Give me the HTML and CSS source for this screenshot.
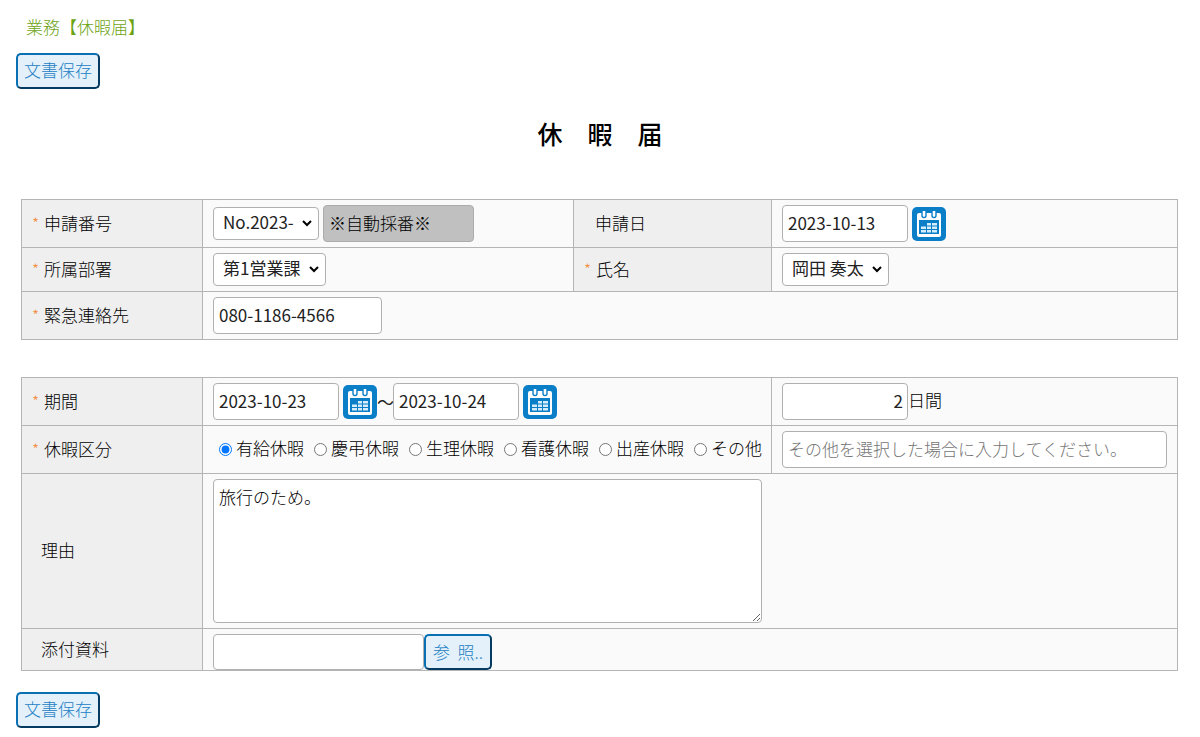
FILE: index.html
```html
<!DOCTYPE html>
<html lang="ja">
<head>
<meta charset="utf-8">
<title>休暇届</title>
<link rel="stylesheet" href="styles.css">
</head>
<body>
<svg class="defs" aria-hidden="true">
  <symbol id="calendar" viewBox="0 0 34 34">
    <rect width="34" height="34" rx="5" fill="#0a7fc8"/>
    <rect x="5" y="6" width="24" height="24" rx="2" fill="#fff"/>
    <rect x="7" y="13" width="20" height="14" fill="#0a7fc8"/>
    <path d="M10 4v4.500a2 2 0 0 0 4 0V4M20 4v4.500a2 2 0 0 0 4 0V4" fill="#fff" stroke="#0a7fc8" stroke-width="1.400"/>
    <path d="M11 4v4.500a1 1 0 0 0 2 0V4zM21 4v4.500a1 1 0 0 0 2 0V4z" fill="#fff"/>
    <path d="M15 16h4v2.500h-4zM20 16h5v2.500h-5zM9 19.500h5V22H9zM15 19.500h4V22h-4zM20 19.500h5V22h-5zM9 23h5v2.500H9zM15 23h4v2.500h-4zM20 23h5v2.500h-5z" fill="#d5edfb"/>
  </symbol>
</svg>
<main class="page">
  <p class="breadcrumb">業務【休暇届】</p>
  <button class="btn" type="button">文書保存</button>
  <h1 class="title">休　暇　届</h1>

  <form class="form">
    <table class="sheet">
      <colgroup><col class="col-label"><col class="col-main"><col class="col-sub"><col></colgroup>
      <tr>
        <th class="required" scope="row"><label for="no">申請番号</label></th>
        <td><div class="fields">
          <select id="no" class="select"><option>No.2023-</option></select>
          <input class="input input--auto" type="text" value="※自動採番※" aria-label="自動採番" readonly>
        </div></td>
        <th class="optional" scope="row"><label for="applied">申請日</label></th>
        <td><div class="fields">
          <input id="applied" class="input input--date" type="text" value="2023-10-13">
          <button class="cal" type="button" aria-label="申請日を選択"><svg><use href="#calendar"/></svg></button>
        </div></td>
      </tr>
      <tr>
        <th class="required" scope="row"><label for="dept">所属部署</label></th>
        <td><div class="fields"><select id="dept" class="select"><option>第1営業課</option></select></div></td>
        <th class="required" scope="row"><label for="name">氏名</label></th>
        <td><div class="fields"><select id="name" class="select"><option>岡田 奏太</option></select></div></td>
      </tr>
      <tr>
        <th class="required" scope="row"><label for="tel">緊急連絡先</label></th>
        <td colspan="3"><div class="fields"><input id="tel" class="input input--tel" type="text" value="080-1186-4566"></div></td>
      </tr>
    </table>

    <table class="sheet">
      <colgroup><col class="col-label"><col class="col-main"><col class="col-sub"><col></colgroup>
      <tr>
        <th class="required" scope="row"><label for="from">期間</label></th>
        <td colspan="2"><div class="fields">
          <input id="from" class="input input--date" type="text" value="2023-10-23">
          <button class="cal" type="button" aria-label="開始日を選択"><svg><use href="#calendar"/></svg></button><span class="tilde">～</span><input class="input input--date" type="text" value="2023-10-24" aria-label="終了日">
          <button class="cal" type="button" aria-label="終了日を選択"><svg><use href="#calendar"/></svg></button>
        </div></td>
        <td><div class="fields">
          <input id="days" class="input input--days" type="text" value="2"><label class="unit" for="days">日間</label>
        </div></td>
      </tr>
      <tr>
        <th class="required" scope="row">休暇区分</th>
        <td colspan="2"><div class="radios">
          <label class="radio"><input type="radio" name="kind" checked><span class="unit">有給休暇</span></label>
          <label class="radio"><input type="radio" name="kind"><span class="unit">慶弔休暇</span></label>
          <label class="radio"><input type="radio" name="kind"><span class="unit">生理休暇</span></label>
          <label class="radio"><input type="radio" name="kind"><span class="unit">看護休暇</span></label>
          <label class="radio"><input type="radio" name="kind"><span class="unit">出産休暇</span></label>
          <label class="radio"><input type="radio" name="kind"><span class="unit">その他</span></label>
        </div></td>
        <td><div class="fields"><input class="input input--fill" type="text" placeholder="その他を選択した場合に入力してください。" aria-label="その他の内容"></div></td>
      </tr>
      <tr>
        <th class="plain" scope="row"><label for="reason">理由</label></th>
        <td colspan="2" class="open-right"><textarea id="reason" class="textarea">旅行のため。</textarea></td>
        <td class="open-left"></td>
      </tr>
      <tr>
        <th class="plain" scope="row"><label for="file">添付資料</label></th>
        <td colspan="3" class="flush"><div class="fields">
          <input id="file" class="input input--file" type="text"><button class="btn btn--browse" type="button">参&nbsp; 照..</button>
        </div></td>
      </tr>
    </table>
  </form>

  <button class="btn" type="button">文書保存</button>
</main>
</body>
</html>
```
FILE: styles.css
```css
* { box-sizing: border-box; }

body {
  margin: 0;
  background: #fff;
  color: #222;
  font: 400 17px/24px "Noto Sans CJK JP", sans-serif;
}

input, select, textarea, button { font: inherit; color: inherit; }

.defs { position: absolute; width: 0; height: 0; }

.page { padding: 15px 22px 8px 16px; }

.breadcrumb { margin: 0 0 14px 10px; color: #6ca313; font-weight: 300; }

.btn {
  display: block;
  height: 36px;
  margin: 0;
  padding: 0 6px 2px;
  border: 2px outset #0a70b4;
  border-radius: 5px;
  background: #e4f1fa;
  color: #2280c4;
  font-weight: 300;
  line-height: 30px;
  white-space: nowrap;
}

.btn--browse { padding: 0 7px; }

.title {
  margin: 26px 0 47px;
  padding-left: 6px;
  color: #000;
  font-size: 25px;
  font-weight: 500;
  line-height: 37px;
  text-align: center;
}

.form {
  display: grid;
  gap: 37px;
  margin: 0 0 21px 5px;
}

.sheet {
  width: 100%;
  border-collapse: collapse;
  table-layout: fixed;
}

.col-label { width: 181px; }
.col-main { width: 371px; }
.col-sub { width: 198px; }

.sheet th,
.sheet td {
  padding: 5px 10px;
  border: 1px solid #b5b5b5;
  text-align: left;
  vertical-align: middle;
}

.sheet th {
  padding-top: 4px;
  padding-bottom: 6px;
  background: #efefef;
  font-weight: 300;
  color: #000;
}

.sheet td { background: #fafafa; }

.required::before {
  content: "*";
  display: inline-block;
  width: 12px;
  color: #f08a3c;
  font-size: 16px;
}

.sheet .optional { padding-left: 21px; }
.sheet .plain { padding-left: 19px; }
.sheet .open-right { border-right: 0; }
.sheet .open-left { border-left: 0; }
.sheet .flush { padding-bottom: 0; }

.fields { display: flex; align-items: center; }

.input,
.select,
.textarea {
  margin: 0;
  border: 1px solid #b0b0b0;
  border-radius: 4px;
  background: #fff;
}

.input { height: 37px; padding: 0 5px 3px; }
.input::placeholder { color: #757575; font-weight: 300; opacity: 1; }
.input--auto { width: 151px; margin-left: 4px; border-color: #acacac; background: #c0c0c0; font-weight: 300; color: #000; }
.input--date { width: 126px; }
.input--tel { width: 169px; }
.input--days { width: 126px; padding-right: 4px; text-align: right; }
.input--fill { width: 100%; }
.input--file { width: 211px; height: 36px; }

.select {
  height: 33px;
  padding: 0 24px 3px 9px;
  appearance: none;
  background: #fff url("data:image/svg+xml,%3Csvg xmlns='http://www.w3.org/2000/svg' width='10' height='7'%3E%3Cpath d='M1 1l4 4 4-4' fill='none' stroke='%23000' stroke-width='2'/%3E%3C/svg%3E") no-repeat right 6px center;
}

.textarea {
  display: block;
  width: 100%;
  height: 144px;
  padding: 5px;
  font-weight: 300;
  color: #000;
}

.cal {
  width: 34px;
  height: 34px;
  margin-left: 4px;
  padding: 0;
  border: 0;
  background: none;
}

.cal svg { display: block; width: 34px; height: 34px; }

.tilde { width: 16px; }

.radios { display: flex; gap: 10px; padding-left: 6px; }

.radio { display: flex; align-items: center; gap: 4px; white-space: nowrap; }
.radio input { width: 13px; height: 13px; margin: 0; }

.unit { padding-bottom: 3px; font-weight: 300; color: #000; }
```
